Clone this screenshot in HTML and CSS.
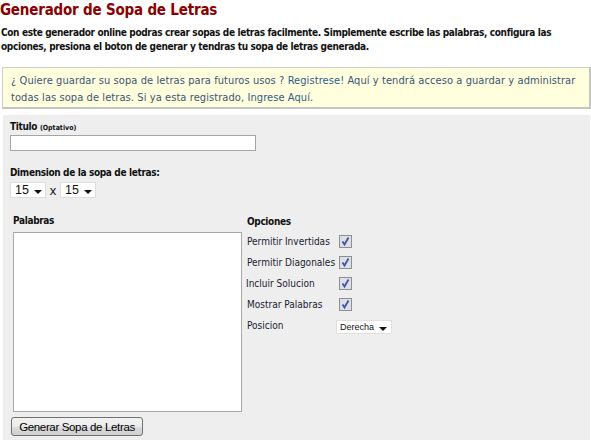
FILE: index.html
```html
<!DOCTYPE html>
<html lang="es">
<head>
<meta charset="utf-8">
<title>Generador de Sopa de Letras</title>
<link rel="stylesheet" href="styles.css">
</head>
<body>
<h1 class="title">Generador de Sopa de Letras</h1>
<p class="intro">Con este generador online podras crear sopas de letras facilmente. Simplemente escribe las palabras, configura las opciones, presiona el boton de generar y tendras tu sopa de letras generada.</p>
<div class="notice">¿ Quiere guardar su sopa de letras para futuros usos ? <a href="#">Registrese!</a> Aquí y tendrá acceso a guardar y administrar todas las sopa de letras. Si ya esta registrado, <a href="#">Ingrese Aquí</a>.</div>
<form class="panel">
  <div class="field-label">Titulo <small>(Optativo)</small></div>
  <div class="text-input"></div>
  <div class="field-label dim-label">Dimension de la sopa de letras:</div>
  <div class="dims">
    <div class="select"><span>15</span><svg class="arrow" width="8" height="4" viewBox="0 0 8 4"><path d="M0 0H8L4 4Z"/></svg></div>
    <span class="times">x</span>
    <div class="select"><span>15</span><svg class="arrow" width="8" height="4" viewBox="0 0 8 4"><path d="M0 0H8L4 4Z"/></svg></div>
  </div>
  <div class="columns">
    <div class="col-left">
      <div class="field-label">Palabras</div>
      <div class="textarea"></div>
      <button type="button" class="btn">Generar Sopa de Letras</button>
    </div>
    <div class="col-right">
      <div class="field-label">Opciones</div>
      <div class="opt"><span class="opt-label">Permitir Invertidas</span><span class="check"><svg width="11" height="11" viewBox="0 0 11 11"><path d="M2.5 5.5L4.5 8.5L8.5 1.5" /></svg></span></div>
      <div class="opt"><span class="opt-label">Permitir Diagonales</span><span class="check"><svg width="11" height="11" viewBox="0 0 11 11"><path d="M2.5 5.5L4.5 8.5L8.5 1.5" /></svg></span></div>
      <div class="opt"><span class="opt-label shift">Incluir Solucion</span><span class="check"><svg width="11" height="11" viewBox="0 0 11 11"><path d="M2.5 5.5L4.5 8.5L8.5 1.5" /></svg></span></div>
      <div class="opt"><span class="opt-label">Mostrar Palabras</span><span class="check"><svg width="11" height="11" viewBox="0 0 11 11"><path d="M2.5 5.5L4.5 8.5L8.5 1.5" /></svg></span></div>
      <div class="opt"><span class="opt-label">Posicion</span><span class="select small"><span>Derecha</span><svg class="arrow" width="8" height="4" viewBox="0 0 8 4"><path d="M0 0H8L4 4Z"/></svg></span></div>
    </div>
  </div>
</form>
</body>
</html>
```
FILE: styles.css
```css
html, body {
  margin: 0;
  padding: 0;
  background: #ffffff;
}
body {
  font-family: "DejaVu Sans Condensed", "DejaVu Sans", sans-serif;
  font-stretch: condensed;
  color: #111111;
  width: 591px;
  height: 440px;
  overflow: hidden;
}
.title {
  margin: 0;
  font-size: 15px;
  line-height: 20px;
  font-weight: bold;
  color: #8b0000;
  letter-spacing: -0.2px;
}
.intro {
  margin: 6px 0 0 1px;
  font-size: 10px;
  line-height: 14px;
  font-weight: bold;
  color: #111111;
  letter-spacing: -0.35px;
}
.notice {
  margin: 13px 0 0 2px;
  height: 35px;
  padding: 4px 2px 0 8px;
  background: #ffffdd;
  border: 1px solid #cccccc;
  border-right: 2px solid #c4c4c4;
  border-bottom: 2px solid #c4c4c4;
  font-size: 11px;
  line-height: 17px;
  letter-spacing: 0.08px;
  color: #3a5577;
}
.notice a {
  color: #2f5d8a;
  text-decoration: none;
}
.panel {
  display: block;
  margin: 6px 1px 0 3px;
  padding: 5px 7px 0 7px;
  height: 320px;
  background: #eeeeee;
}
.field-label {
  font-size: 10px;
  line-height: 14px;
  font-weight: bold;
  color: #111111;
  letter-spacing: -0.35px;
}
.field-label small {
  font-size: 7px;
  letter-spacing: 0;
}
.text-input {
  width: 244px;
  height: 14px;
  background: #ffffff;
  border: 1px solid #a5a5a5;
}
.dim-label {
  margin-top: 15px;
}
.dims {
  display: flex;
  align-items: center;
  margin-top: 2px;
  height: 16px;
}
.select {
  display: flex;
  align-items: center;
  justify-content: space-between;
  box-sizing: border-box;
  height: 16px;
  width: 36px;
  padding: 0 3px 0 4px;
  background: #ffffff;
  border: 1px solid #dddddd;
  font-family: "Liberation Sans", Arial, sans-serif;
  font-size: 12.5px;
  color: #111111;
}
.select .arrow {
  margin-top: 3px;
  fill: #111111;
}
.times {
  width: 14px;
  text-align: center;
  font-family: "Liberation Sans", Arial, sans-serif;
  font-size: 13px;
}
.columns {
  display: flex;
  margin-top: 16px;
  margin-left: 3px;
}
.col-left {
  width: 234px;
}
.textarea {
  width: 227px;
  height: 178px;
  margin-top: 4px;
  background: #ffffff;
  border: 1px solid #a9a9a9;
}
.btn {
  display: block;
  margin: 5px 0 0 -2px;
  width: 132px;
  height: 19px;
  padding: 0;
  border: 1px solid #707070;
  border-radius: 3px;
  background: linear-gradient(#f2f2f2 0%, #ebebeb 50%, #dddddd 51%, #cfcfcf 100%);
  font-family: "Liberation Sans", Arial, sans-serif;
  font-size: 11.5px;
  letter-spacing: -0.35px;
  white-space: nowrap;
  color: #000000;
}
.col-right {
  width: 160px;
}
.col-right .field-label {
  margin-top: 1px;
  margin-bottom: 2px;
}
.opt {
  display: flex;
  align-items: center;
  height: 21px;
}
.opt-label {
  width: 92px;
  font-size: 10px;
  color: #1a1a33;
  white-space: nowrap;
}
.opt-label.shift {
  margin-left: -1px;
  width: 93px;
}
.check {
  display: flex;
  align-items: center;
  justify-content: center;
  box-sizing: border-box;
  width: 13px;
  height: 13px;
  border: 1px solid #8f8f8f;
  background: #dcdfe8;
}
.check svg path {
  fill: none;
  stroke: #3f55a0;
  stroke-width: 1.8;
}
.select.small {
  width: 56px;
  height: 14px;
  margin-left: -3px;
  margin-top: 2px;
  padding: 0 4px 0 3px;
  font-size: 9px;
  border-color: #e0e0e0;
}
.select.small .arrow {
  margin-top: 5px;
}
```
